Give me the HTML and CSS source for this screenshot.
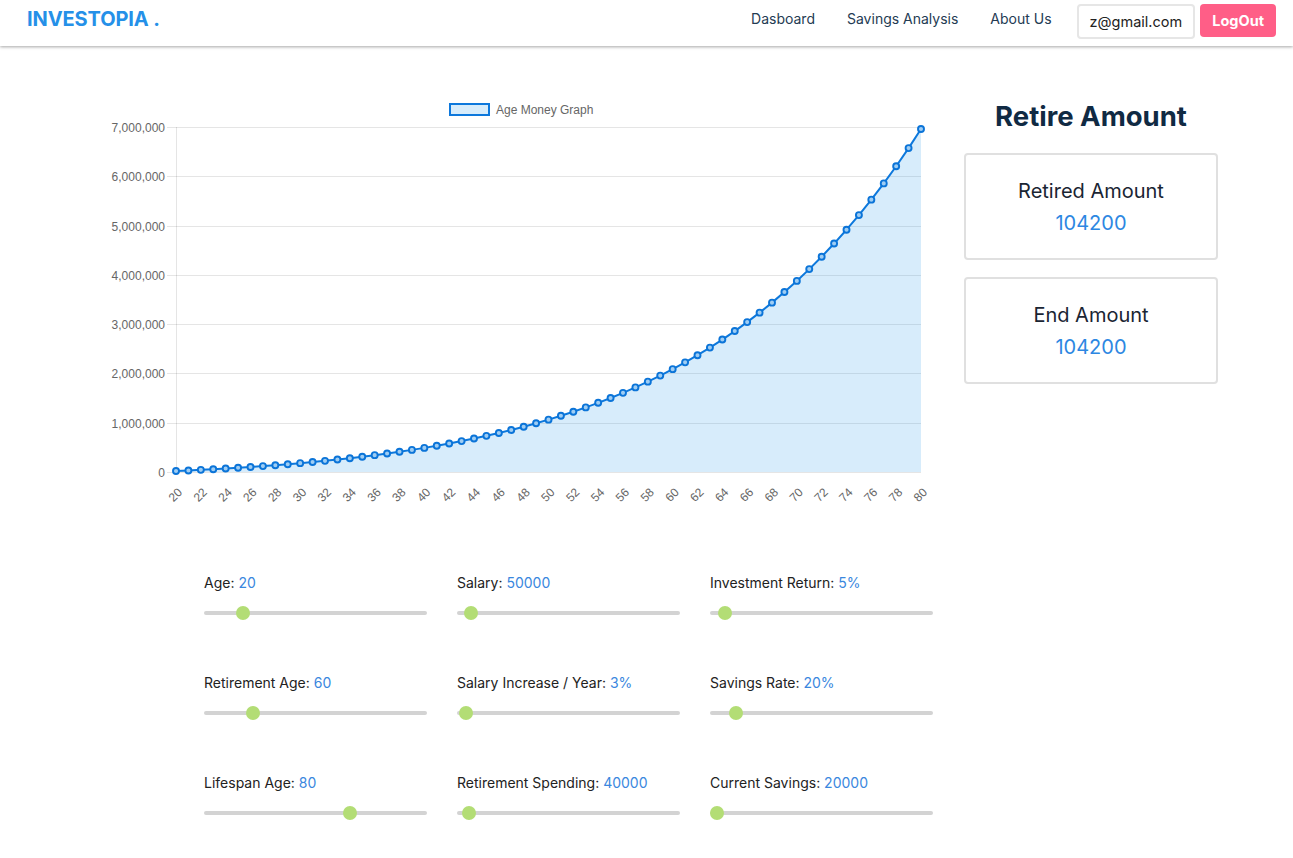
FILE: index.html
```html
<!DOCTYPE html>
<html lang="en">
<head>
<meta charset="utf-8">
<title>Investopia</title>
<link rel="stylesheet" href="styles.css">
</head>
<body>
<header class="navbar">
  <a class="brand" href="#">INVESTOPIA .</a>
  <nav class="nav-links">
    <a href="#">Dasboard</a>
    <a href="#">Savings Analysis</a>
    <a href="#">About Us</a>
  </nav>
  <span class="email">z@gmail.com</span>
  <button class="logout">LogOut</button>
</header>
<main class="page">
  <section class="left">
    <svg id="chart" class="chart" width="840" height="430" viewBox="0 0 840 430"></svg>
    <div class="controls">
      <div class="control"><div class="label">Age: <span class="val">20</span></div><input class="range" type="range" min="0" max="130" value="20"></div>
      <div class="control"><div class="label">Salary: <span class="val">50000</span></div><input class="range" type="range" min="0" max="1500000" value="50000"></div>
      <div class="control"><div class="label">Investment Return: <span class="val">5%</span></div><input class="range" type="range" min="0" max="130" value="5"></div>
      <div class="control"><div class="label">Retirement Age: <span class="val">60</span></div><input class="range" type="range" min="0" max="300" value="60"></div>
      <div class="control"><div class="label">Salary Increase / Year: <span class="val">3%</span></div><input class="range" type="range" min="0" max="300" value="3"></div>
      <div class="control"><div class="label">Savings Rate: <span class="val">20%</span></div><input class="range" type="range" min="0" max="220" value="20"></div>
      <div class="control"><div class="label">Lifespan Age: <span class="val">80</span></div><input class="range" type="range" min="0" max="120" value="80"></div>
      <div class="control"><div class="label">Retirement Spending: <span class="val">40000</span></div><input class="range" type="range" min="0" max="1600000" value="40000"></div>
      <div class="control"><div class="label">Current Savings: <span class="val">20000</span></div><input class="range" type="range" min="20000" max="1000000" value="20000"></div>
    </div>
  </section>
  <aside class="right">
    <h1 class="retire-title">Retire Amount</h1>
    <div class="card">
      <div class="card-title">Retired Amount</div>
      <div class="card-value">104200</div>
    </div>
    <div class="card">
      <div class="card-title">End Amount</div>
      <div class="card-value">104200</div>
    </div>
  </aside>
</main>
<script src="script.js"></script>
</body>
</html>
```
FILE: styles.css
```css
* { box-sizing: border-box; }
html, body { margin: 0; padding: 0; background: #fff; }
body { font-family: Inter, "Noto Sans", sans-serif; color: #1f2933; }

.navbar {
  height: 46px;
  display: flex;
  align-items: flex-start;
  padding: 4px 17px 0 27px;
  background: #fff;
  box-shadow: 0 1px 3px rgba(0,0,0,0.35);
  position: relative;
  z-index: 2;
}
.brand {
  font-weight: 700;
  font-size: 20px;
  line-height: 30px;
  color: #2590e8;
  text-decoration: none;
  letter-spacing: -0.1px;
}
.nav-links {
  margin-left: auto;
  display: flex;
  gap: 32px;
}
.nav-links a {
  font-size: 14px;
  line-height: 30px;
  color: #243b53;
  text-decoration: none;
}
.email {
  margin-left: 25px;
  height: 35px;
  padding: 0 11px;
  border: 2px solid #e6e6e6;
  border-radius: 4px;
  font-size: 14.5px;
  line-height: 31px;
  color: #222;
}
.logout {
  margin-left: 5px;
  height: 33px;
  padding: 0 12px;
  border: none;
  border-radius: 4px;
  background: #ff5e87;
  color: #fff;
  font-family: Inter, sans-serif;
  font-weight: 700;
  font-size: 14.5px;
}

.page {
  display: flex;
  gap: 24px;
  padding: 44px 0 0 100px;
}
.left { width: 840px; }
.chart { display: block; font-family: "Liberation Sans", Arial, sans-serif; }

.controls {
  display: grid;
  grid-template-columns: repeat(3, 223px);
  column-gap: 30px;
  row-gap: 53px;
  margin: 53px 0 0 104px;
}
.label {
  font-size: 14px;
  line-height: 20px;
  color: #222;
  margin-bottom: 13px;
}
.val { color: #3a87de; }

.range {
  -webkit-appearance: none;
  appearance: none;
  display: block;
  width: 223px;
  height: 14px;
  margin: 0;
  background: transparent;
}
.range::-webkit-slider-runnable-track {
  height: 4px;
  background: #d3d3d3;
  border-radius: 2px;
}
.range::-webkit-slider-thumb {
  -webkit-appearance: none;
  width: 14px;
  height: 14px;
  border-radius: 50%;
  background: #b3dd75;
  border: none;
  margin-top: -5px;
}
.range::-moz-range-track { height: 4px; background: #d3d3d3; }
.range::-moz-range-thumb { width: 14px; height: 14px; border-radius: 50%; background: #b3dd75; border: none; }

.right { width: 254px; }
.retire-title {
  margin: 9px 0 20px;
  font-size: 27.5px;
  line-height: 34px;
  font-weight: 700;
  text-align: center;
  color: #102a43;
}
.card {
  height: 107px;
  border: 2px solid #e0e0e0;
  border-radius: 4px;
  padding-top: 21px;
  text-align: center;
  margin-bottom: 17px;
}
.card-title {
  font-size: 20px;
  line-height: 30px;
  color: #1a2533;
}
.card-value {
  font-size: 20px;
  line-height: 30px;
  margin-top: 2px;
  color: #2d87e2;
}
```
FILE: script.js
```js
(function () {
  var svg = document.getElementById('chart');
  var NS = 'http://www.w3.org/2000/svg';
  var L = 76, R = 821, T = 37, B = 382, MAX = 7000000;
  function el(tag, attrs, txt) {
    var e = document.createElementNS(NS, tag);
    for (var k in attrs) e.setAttribute(k, attrs[k]);
    if (txt !== undefined) e.textContent = txt;
    svg.appendChild(e);
    return e;
  }
  function fmt(n) { return String(n).replace(/\B(?=(\d{3})+(?!\d))/g, ','); }

  // legend
  el('rect', { x: 350, y: 14, width: 39, height: 11, fill: 'rgba(54,162,235,0.2)', stroke: '#0d78dc', 'stroke-width': 2 });
  el('text', { x: 396, y: 23.5, 'font-size': 12, fill: '#666' }, 'Age Money Graph');

  // y grid + labels
  for (var i = 0; i <= 7; i++) {
    var y = Math.round(B - i * (B - T) / 7) + 0.5;
    el('line', { x1: 67, y1: y, x2: R, y2: y, stroke: 'rgba(0,0,0,0.1)', 'stroke-width': 1 });
    el('text', { x: 65, y: y + 4, 'font-size': 12, fill: '#666', 'text-anchor': 'end' }, fmt(i * 1000000));
  }
  el('line', { x1: L + 0.5, y1: T, x2: L + 0.5, y2: B + 1, stroke: 'rgba(0,0,0,0.1)', 'stroke-width': 1 });

  // data
  var pts = [];
  for (var n = 0; n <= 60; n++) {
    var v = 20000 * Math.pow(1.05, n) + 10300 * (Math.pow(1.05, n) - Math.pow(1.03, n)) / 0.02;
    var x = L + n * (R - L) / 60;
    var yy = B - v / MAX * (B - T);
    pts.push([x, yy]);
  }
  var d = 'M' + pts.map(function (p) { return p[0].toFixed(2) + ' ' + p[1].toFixed(2); }).join(' L');
  el('path', { d: d + ' L' + R + ' ' + B + ' L' + L + ' ' + B + ' Z', fill: 'rgba(54,162,235,0.2)', stroke: 'none' });
  el('path', { d: d, fill: 'none', stroke: '#0d78dc', 'stroke-width': 2, 'stroke-linejoin': 'round' });
  pts.forEach(function (p) {
    el('circle', { cx: p[0], cy: p[1], r: 3, fill: '#9fcdf3', stroke: '#0b74d8', 'stroke-width': 1.9 });
  });

  // x labels
  for (var a = 20; a <= 80; a += 2) {
    var xx = L + (a - 20) * (R - L) / 60;
    el('text', { transform: 'translate(' + (xx + 7) + ',' + 403 + ') rotate(-45)', 'font-size': 12, fill: '#666', 'text-anchor': 'end' }, String(a));
  }
})();
```
